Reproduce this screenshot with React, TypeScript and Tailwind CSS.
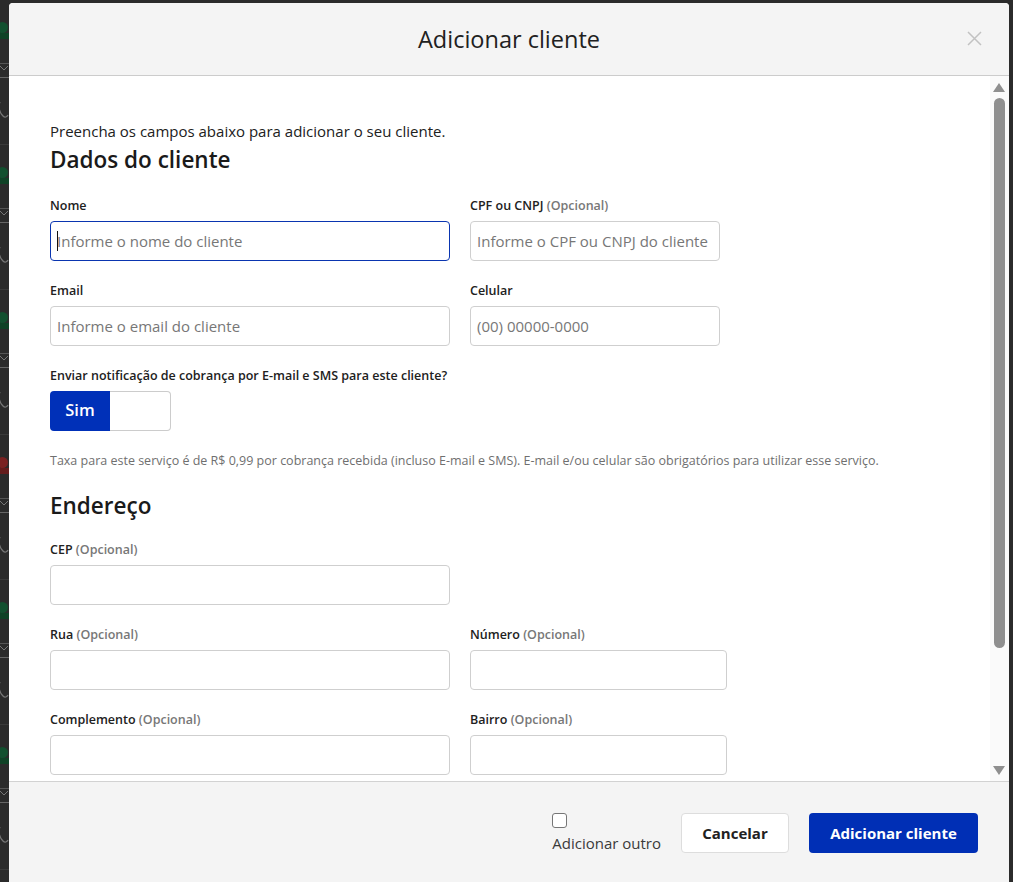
import type { ReactNode } from 'react'

const font = { fontFamily: '"Open Sans", "Noto Sans", sans-serif' }

function BgBlock({ red }: { red?: boolean }) {
  return (
    <div className="relative h-[145px] shrink-0 border-b border-[#3a3a3a]">
      <div className={`absolute left-[-3px] top-[22px] w-[11px] h-[11px] rounded-full ${red ? 'bg-[#7a2222]' : 'bg-[#12502f]'}`} />
      <div className={`absolute left-0 top-[33px] w-[9px] h-[6px] ${red ? 'bg-[#641c1c]' : 'bg-[#0f4226]'}`} />
      <div className="absolute left-0 top-[63px] w-[9px] h-px bg-[#555]" />
      <svg className="absolute left-[-1px] top-[64px]" width="10" height="8" viewBox="0 0 10 8">
        <path d="M1 2 L5 6 L9 2" stroke="#777" strokeWidth="1" fill="none" />
      </svg>
      <div className="absolute left-0 top-[77px] w-[9px] h-px bg-[#666]" />
      <svg className="absolute left-[-3px] top-[100px]" width="12" height="20" viewBox="0 0 12 20">
        <path d="M3 2 C1 6 2 12 6 16 C8 18 10 17 11 15" stroke="#777" strokeWidth="1.3" fill="none" />
      </svg>
    </div>
  )
}

function Label({ text, optional }: { text: string; optional?: boolean }) {
  return (
    <div className="h-[17px] pt-px mb-[7px] text-[12.5px] leading-4 font-semibold text-[#212121] whitespace-nowrap">
      {text}
      {optional && <span className="text-[#777] font-semibold"> (Opcional)</span>}
    </div>
  )
}

function Field({ label, optional, placeholder, width, children }: {
  label: string; optional?: boolean; placeholder?: string; width: string; children?: ReactNode
}) {
  return (
    <div className={width}>
      <Label text={label} optional={optional} />
      {children ?? (
        <input
          placeholder={placeholder}
          style={font}
          className="w-full h-10 rounded-[4px] border border-[#cfcfcf] px-[6px] text-[15px] text-[#212121] placeholder:text-[#777] outline-none bg-white"
        />
      )}
    </div>
  )
}

function Scrollbar() {
  return (
    <div className="w-[19px] shrink-0 bg-[#fafafa] flex flex-col items-center pr-px">
      <svg className="mt-[7px]" width="12" height="9" viewBox="0 0 12 9">
        <path d="M6 0 L12 9 L0 9 Z" fill="#8f8f8f" />
      </svg>
      <div className="mt-[6px] w-[11px] h-[550px] rounded-full bg-[#8f8f8f]" />
      <div className="flex-1" />
      <svg className="mb-[6px]" width="12" height="9" viewBox="0 0 12 9">
        <path d="M0 0 L12 0 L6 9 Z" fill="#8f8f8f" />
      </svg>
    </div>
  )
}

export default function App() {
  return (
    <div style={font} className="w-full h-[882px] bg-[#2b2b2b] flex overflow-hidden">
      <div className="w-[9px] shrink-0 flex flex-col overflow-hidden">
        <BgBlock />
        <BgBlock />
        <BgBlock />
        <BgBlock red />
        <BgBlock />
        <BgBlock />
      </div>

      <div className="w-[1000px] shrink-0 mt-[3px] h-[879px] bg-white rounded-t-[4px] overflow-hidden flex flex-col">
        {/* header */}
        <div className="relative h-[73px] shrink-0 bg-[#f4f4f4] border-b border-[#cccccc] flex items-center justify-center">
          <h2 className="text-[23.5px] text-[#212121] leading-8 -mt-px">Adicionar cliente</h2>
          <button className="absolute right-[27px] top-[28px] p-0">
            <svg width="15" height="15" viewBox="0 0 15 15">
              <path d="M1 1 L14 14 M14 1 L1 14" stroke="#c2c2c2" strokeWidth="1.5" />
            </svg>
          </button>
        </div>

        {/* body */}
        <div className="h-[705px] shrink-0 flex">
          <div className="flex-1 overflow-hidden pl-[41px] pt-[45px]">
            <p className="text-[15px] leading-5 text-[#212121]">Preencha os campos abaixo para adicionar o seu cliente.</p>
            <h3 className="mt-[4px] text-[22.5px] leading-[30px] font-semibold text-[#1a1a1a]">Dados do cliente</h3>

            <div className="mt-[22px] flex gap-5">
              <Field label="Nome" width="w-[400px]">
                <div className="relative">
                  <input
                    placeholder="Informe o nome do cliente"
                    style={font}
                    className="w-full h-10 rounded-[4px] border border-[#0a35b0] px-[6px] text-[15px] placeholder:text-[#777] outline-none bg-white"
                  />
                  <div className="absolute left-[7px] top-[10px] w-px h-[20px] bg-[#111]" />
                </div>
              </Field>
              <Field label="CPF ou CNPJ" optional placeholder="Informe o CPF ou CNPJ do cliente" width="w-[250px]" />
            </div>

            <div className="mt-[21px] flex gap-5">
              <Field label="Email" placeholder="Informe o email do cliente" width="w-[400px]" />
              <Field label="Celular" placeholder="(00) 00000-0000" width="w-[250px]" />
            </div>

            <div className="mt-[21px]">
              <Label text="Enviar notificação de cobrança por E-mail e SMS para este cliente?" />
              <div className="flex w-[121px] h-10">
                <div className="w-[60px] h-full pb-px bg-[#0030b8] rounded-l-[4px] flex items-center justify-center text-white text-[16.5px] font-semibold">Sim</div>
                <div className="flex-1 h-full bg-white border border-l-0 border-[#cccccc] rounded-r-[4px]" />
              </div>
            </div>

            <p className="mt-[22px] text-[12.5px] leading-4 text-[#6f6f6f] whitespace-nowrap">
              Taxa para este serviço é de R$ 0,99 por cobrança recebida (incluso E-mail e SMS). E-mail e/ou celular são obrigatórios para utilizar esse serviço.
            </p>

            <h3 className="mt-[22px] text-[22.5px] leading-[30px] font-semibold text-[#1a1a1a]">Endereço</h3>

            <div className="mt-[20px]">
              <Field label="CEP" optional width="w-[400px]" />
            </div>

            <div className="mt-[21px] flex gap-5">
              <Field label="Rua" optional width="w-[400px]" />
              <Field label="Número" optional width="w-[257px]" />
            </div>

            <div className="mt-[21px] flex gap-5">
              <Field label="Complemento" optional width="w-[400px]" />
              <Field label="Bairro" optional width="w-[257px]" />
            </div>
          </div>
          <Scrollbar />
        </div>

        {/* footer */}
        <div className="flex-1 bg-[#f4f4f4] border-t border-[#d2d2d2] flex justify-end items-start pt-[31px] pr-[31px] gap-5">
          <label className="flex flex-col items-start">
            <span className="w-[15px] h-[15px] rounded-[3px] border border-[#767676] bg-white" />
            <span className="mt-[5px] text-[15px] leading-5 text-[#3a3a3a]">Adicionar outro</span>
          </label>
          <button className="w-[108px] h-10 pt-px rounded-[4px] bg-white border border-[#dddddd] text-[15px] font-bold text-[#212121]">Cancelar</button>
          <button className="w-[169px] h-10 pt-px rounded-[4px] bg-[#002fb5] text-[15px] font-bold text-white">Adicionar cliente</button>
        </div>
      </div>
    </div>
  )
}
